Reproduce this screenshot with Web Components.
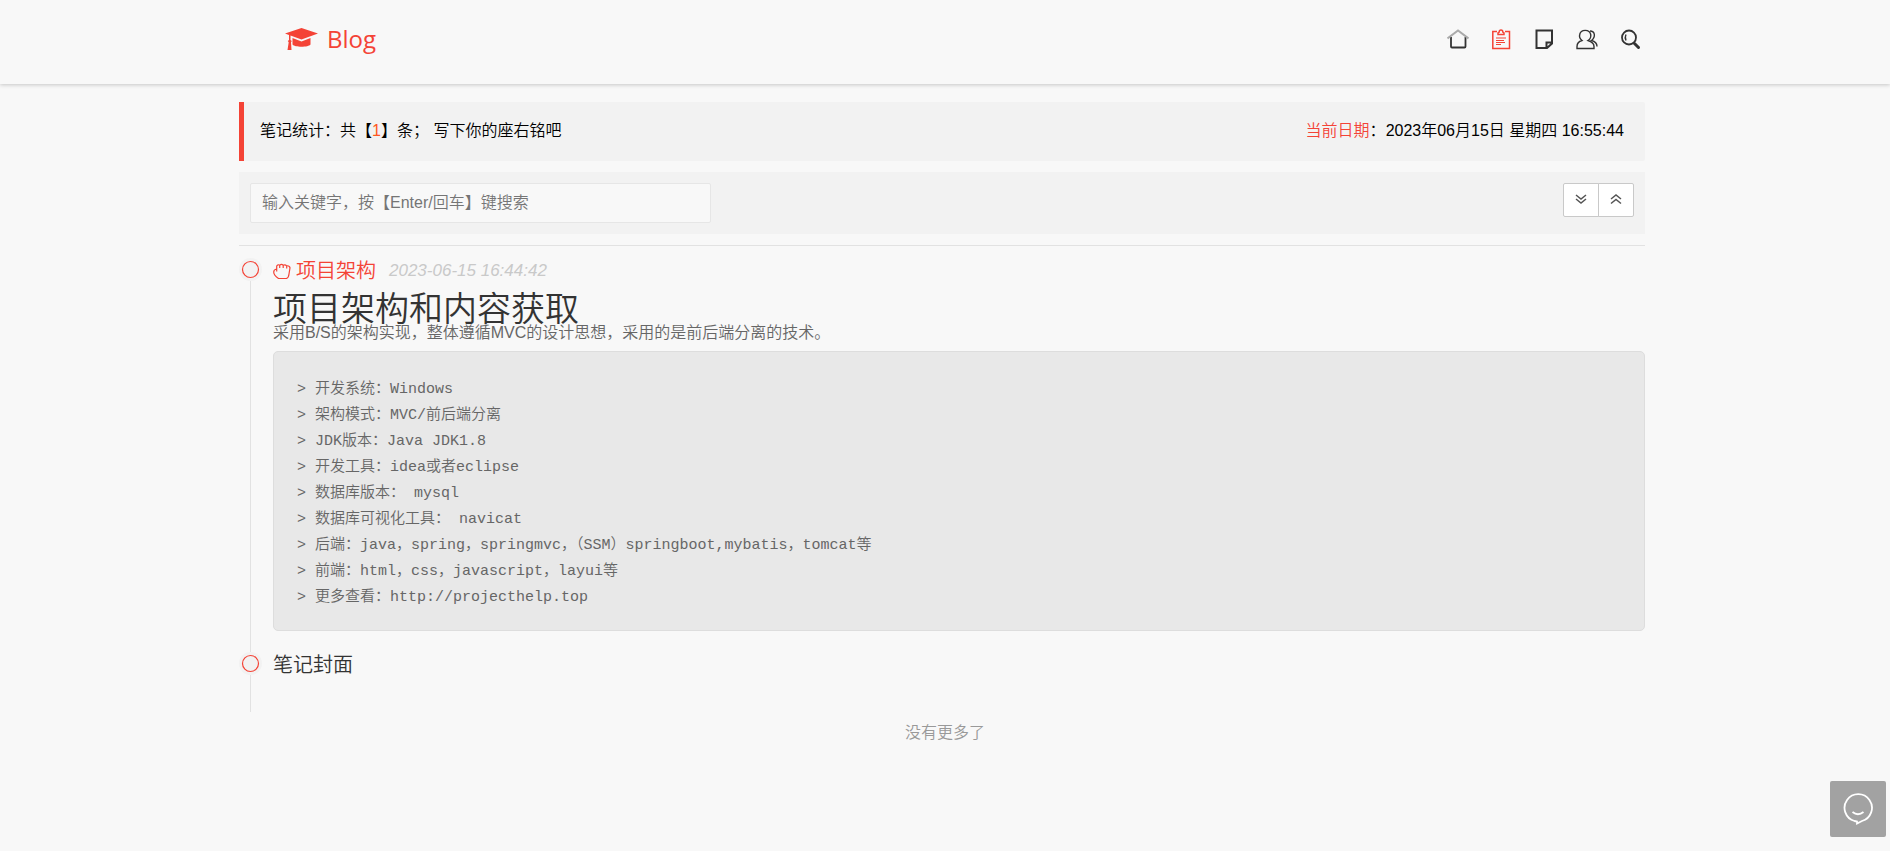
<!DOCTYPE html>
<html lang="zh-CN">

<head>
  <meta charset="UTF-8">
  <meta name="viewport" content="width=device-width, initial-scale=1.0">
  <title>Blog</title>
  <style>
    body {
      margin: 0;
      background: #f8f8f8;
      color: #000;
      font: 350 16px/24px "Liberation Sans", "Noto Sans CJK SC", sans-serif;
    }
  </style>
</head>

<body>
  <blog-header></blog-header>
  <blog-main>
    <note-summary count="1" date="2023年06月15日 星期四 16:55:44">写下你的座右铭吧</note-summary>
    <note-search></note-search>
    <note-item name="项目架构" time="2023-06-15 16:44:42" active>
      <note-content heading="项目架构和内容获取">
        <span slot="intro">采用B/S的架构实现，整体遵循MVC的设计思想，采用的是前后端分离的技术。</span>&gt; 开发系统：Windows
&gt; 架构模式：MVC/前后端分离
&gt; JDK版本：Java JDK1.8
&gt; 开发工具：idea或者eclipse
&gt; 数据库版本： mysql
&gt; 数据库可视化工具： navicat
&gt; 后端：java，spring，springmvc，（SSM）springboot,mybatis，tomcat等
&gt; 前端：html，css，javascript，layui等
&gt; 更多查看：http://projecthelp.top</note-content>
    </note-item>
    <note-item name="笔记封面"></note-item>
  </blog-main>
  <blog-more>没有更多了</blog-more>
  <chat-button></chat-button>

  <template id="blog-header">
    <style>
      :host {
        display: block;
        background: #f8f8f8;
        box-shadow: 0 1px 4px rgba(0, 0, 0, .2);
      }

      header {
        display: flex;
        align-items: center;
        justify-content: space-between;
        height: 84px;
        box-sizing: border-box;
        padding: 0 249px 6px 284px;
      }

      a {
        display: flex;
        color: #333;
        text-decoration: none;
      }

      .logo {
        align-items: center;
        gap: 8px;
        color: #f44336;
        font: 400 24px/32px "Open Sans", sans-serif;
      }

      nav {
        display: flex;
        gap: 21px;
      }

      nav a.on {
        color: #f44336;
      }

      nav svg {
        fill: none;
        stroke: currentColor;
      }
    </style>
    <header>
      <a class="logo" href="#">
        <svg width="35" height="24" viewBox="0 0 35 24" fill="currentColor">
          <path d="M17.500 1L1 6.500l4 1.400V13l-1.200 1 .9 1.300L3.500 23h4L7 15.300l.8-1.200L6.500 13V8.500l11 4L34 6.500z" />
          <path d="M8.500 11v6.500c2 3 16 3 18 0V11l-9 3.500z" />
        </svg>
        <span>Blog</span>
      </a>
      <nav>
        <a href="#" aria-label="首页">
          <svg width="22" height="22" viewBox="0 0 22 22" stroke-width="1.800">
            <path d="M4 9v9.500q0 1 1 1h12.500q1 0 1-1V9" />
            <path d="M.5 10.500L11 2.500l10.500 8" stroke="#aaa" stroke-width="2" />
          </svg>
        </a>
        <a class="on" href="#" aria-label="笔记">
          <svg width="22" height="22" viewBox="0 0 22 22" stroke-width="1.500">
            <path d="M7 3.500H2.800v17h16.700v-17H15" />
            <path d="M8 6.500h6V4.800L12.800 4q0-2-1.800-2T9.200 4L8 4.800z" />
            <path d="M6 10h10M6 12.500h8M6 14.500h9M6 16.500h5" stroke-width="1" />
          </svg>
        </a>
        <a href="#" aria-label="便签">
          <svg width="22" height="22" viewBox="0 0 22 22" stroke-width="2">
            <path d="M3.500 2.500h15.500v13L14 20H3.500zM19 14.500h-5.500V20" />
          </svg>
        </a>
        <a href="#" aria-label="关于">
          <svg width="22" height="22" viewBox="0 0 22 22" stroke-width="1.400">
            <path d="M1 20.500v-2q0-4.500 5-6c-2.500-2-2.800-4-2.300-6 1-5.500 10-5.500 11 0 .5 2.500-.3 4.500-2.700 6 5 1.500 6 3.500 6 6v2z" />
            <path d="M14 3c5 0 6 6 1.500 9.500 4 1 5.500 3 5.500 6" />
          </svg>
        </a>
        <a href="#" aria-label="搜索">
          <svg width="22" height="22" viewBox="0 0 22 22">
            <circle cx="10" cy="9.500" r="7" stroke-width="1.800" />
            <path d="M7 6.500q-1.500 3 0 6" stroke-width="1.400" />
            <path d="M15.500 15.500l4 4" stroke-width="3" stroke-linecap="round" />
          </svg>
        </a>
      </nav>
    </header>
  </template>

  <template id="blog-main">
    <style>
      :host {
        display: block;
        padding: 18px 245px 0 239px;
      }
    </style>
    <slot></slot>
  </template>

  <template id="note-summary">
    <style>
      :host {
        display: flex;
        justify-content: space-between;
        margin-bottom: 11px;
        padding: 17px 21px 18px 16px;
        border-left: 5px solid #f44336;
        border-radius: 0 2px 2px 0;
        background: #f2f2f2;
      }

      .count {
        color: #ff5722;
      }

      .label {
        color: #f44336;
      }
    </style>
    <div>笔记统计：共【<span class="count"></span>】条； <slot></slot></div>
    <div><span class="label">当前日期</span>：<time></time></div>
  </template>

  <template id="note-search">
    <style>
      :host {
        display: block;
        margin-bottom: 12px;
        padding-bottom: 11px;
        border-bottom: 1px solid #e2e2e2;
      }

      form {
        display: flex;
        align-items: flex-start;
        justify-content: space-between;
        padding: 11px;
        background: #f2f2f2;
      }

      input {
        width: 33.3%;
        height: 40px;
        box-sizing: border-box;
        padding: 0 11px;
        border: 1px solid #e6e6e6;
        border-radius: 2px;
        background: #f8f8f8;
        font: inherit;
      }

      input::placeholder {
        color: #757575;
      }

      .group {
        display: flex;
      }

      button {
        display: flex;
        align-items: center;
        justify-content: center;
        width: 36px;
        height: 34px;
        padding: 0 0 3px;
        border: 1px solid #c9c9c9;
        border-radius: 2px 0 0 2px;
        background: #fff;
      }

      button + button {
        margin-left: -1px;
        border-radius: 0 2px 2px 0;
      }

      svg {
        fill: none;
        stroke: #555;
        stroke-width: 1.500;
      }
    </style>
    <form>
      <input type="text" aria-label="搜索" placeholder="输入关键字，按【Enter/回车】键搜索">
      <div class="group">
        <button type="button" aria-label="展开">
          <svg width="12" height="12" viewBox="0 0 12 12"><path d="M1 2l5 4 5-4M1 6l5 4 5-4" /></svg>
        </button>
        <button type="button" aria-label="收起">
          <svg width="12" height="12" viewBox="0 0 12 12"><path d="M1 6l5-4 5 4M1 10.500l5-4 5 4" /></svg>
        </button>
      </div>
    </form>
  </template>

  <template id="note-item">
    <style>
      :host {
        display: flex;
        gap: 11px;
        color: #666;
      }

      .axis {
        display: flex;
        flex-direction: column;
        align-items: center;
        width: 23px;
      }

      .axis::after {
        content: "";
        flex: 1;
        width: 1px;
        background: #e2e2e2;
      }

      .axis svg {
        border-radius: 50%;
        background: #f2f2f2;
      }

      .body {
        flex: 1;
        padding-bottom: 21px;
      }

      h3 {
        display: flex;
        align-items: center;
        gap: 5px;
        margin: 0 0 13px;
        color: #333;
        font-size: 20px;
        font-weight: inherit;
        line-height: 26px;
      }

      .hand,
      time {
        display: none;
      }

      :host([active]) h3 {
        color: #f44336;
      }

      :host([active]) .hand,
      :host([active]) time {
        display: block;
      }

      time {
        margin-left: 8px;
        color: #c9c9c9;
        font-size: 17px;
        font-style: italic;
      }
    </style>
    <div class="axis">
      <svg width="23" height="23" viewBox="0 0 23 23" fill="none" stroke="#f44336">
        <circle cx="11.500" cy="11.500" r="8" stroke-width="1.200" />
      </svg>
    </div>
    <div class="body">
      <h3>
        <svg class="hand" width="18" height="20" viewBox="0 0 18 20" fill="none" stroke="currentColor" stroke-width="1.200">
          <path d="M5.500 17.500C2.500 15.500.7 13.500.7 11q0-2.500 3-3V5q1.300-2 3-.8 1.800-1.500 3.500 0 2-1 3.500.6 3-.3 3.300 2L16 13q-.3 3.500-2.500 4.500zM3.700 7.500v3M6.700 4.500V7M10.200 4.500V7M13.700 5v2.500" />
        </svg>
        <span class="name"></span>
        <time></time>
      </h3>
      <slot></slot>
    </div>
  </template>

  <template id="note-content">
    <style>
      :host {
        display: block;
      }

      h1 {
        margin: 0;
        color: #333;
        font-size: 34px;
        font-weight: inherit;
        line-height: 24px;
      }

      p {
        margin: 0 0 6px;
      }

      pre {
        margin: 0;
        padding: 25px 23px 19px;
        border: 1px solid #ddd;
        border-radius: 5px;
        background: #e8e8e8;
        font: 350 15px/26px "Liberation Mono", "Noto Sans CJK SC", monospace;
      }
    </style>
    <h1></h1>
    <p><slot name="intro"></slot></p>
    <pre><slot></slot></pre>
  </template>

  <template id="blog-more">
    <style>
      :host {
        display: block;
        padding: 9px 0;
        color: #999;
        text-align: center;
      }
    </style>
    <slot></slot>
  </template>

  <template id="chat-button">
    <style>
      :host {
        position: fixed;
        right: 4px;
        bottom: 14px;
      }

      button {
        display: flex;
        align-items: center;
        justify-content: center;
        width: 56px;
        height: 56px;
        padding: 0;
        border: 0;
        border-radius: 2px;
        background: #a2a2a2;
      }
    </style>
    <button type="button" aria-label="留言">
      <svg width="32" height="32" viewBox="0 0 32 32" fill="none" stroke="#fff" stroke-width="1.800">
        <path d="M12.500 28A13.700 13.700 0 1 1 20 28l-5 2.500v-2z" />
        <path d="M10.500 19q5.500 4.500 11 0" />
      </svg>
    </button>
  </template>
</body>
<script>
  class BlogElement extends HTMLElement {
    constructor() {
      super()
      let shadowRoot = this.attachShadow({ mode: 'open' })
      shadowRoot.appendChild(document.getElementById(this.localName).content.cloneNode(true))
    }

    setText(selector, attribute) {
      this.shadowRoot.querySelector(selector).textContent = this.getAttribute(attribute) || ''
    }
  }

  class BlogHeader extends BlogElement { }
  class BlogMain extends BlogElement { }
  class NoteSearch extends BlogElement { }
  class BlogMore extends BlogElement { }
  class ChatButton extends BlogElement { }

  class NoteSummary extends BlogElement {
    connectedCallback() {
      this.setText('.count', 'count')
      this.setText('time', 'date')
    }
  }

  class NoteItem extends BlogElement {
    connectedCallback() {
      this.setText('.name', 'name')
      this.setText('time', 'time')
    }
  }

  class NoteContent extends BlogElement {
    connectedCallback() {
      this.setText('h1', 'heading')
      // drop the indent before the first line of the code block
      let first = this.firstChild
      if (first.nodeType === Node.TEXT_NODE && !first.data.trim()) first.remove()
    }
  }

  window.customElements.define('blog-header', BlogHeader)
  window.customElements.define('blog-main', BlogMain)
  window.customElements.define('note-summary', NoteSummary)
  window.customElements.define('note-search', NoteSearch)
  window.customElements.define('note-item', NoteItem)
  window.customElements.define('note-content', NoteContent)
  window.customElements.define('blog-more', BlogMore)
  window.customElements.define('chat-button', ChatButton)
</script>

</html>
